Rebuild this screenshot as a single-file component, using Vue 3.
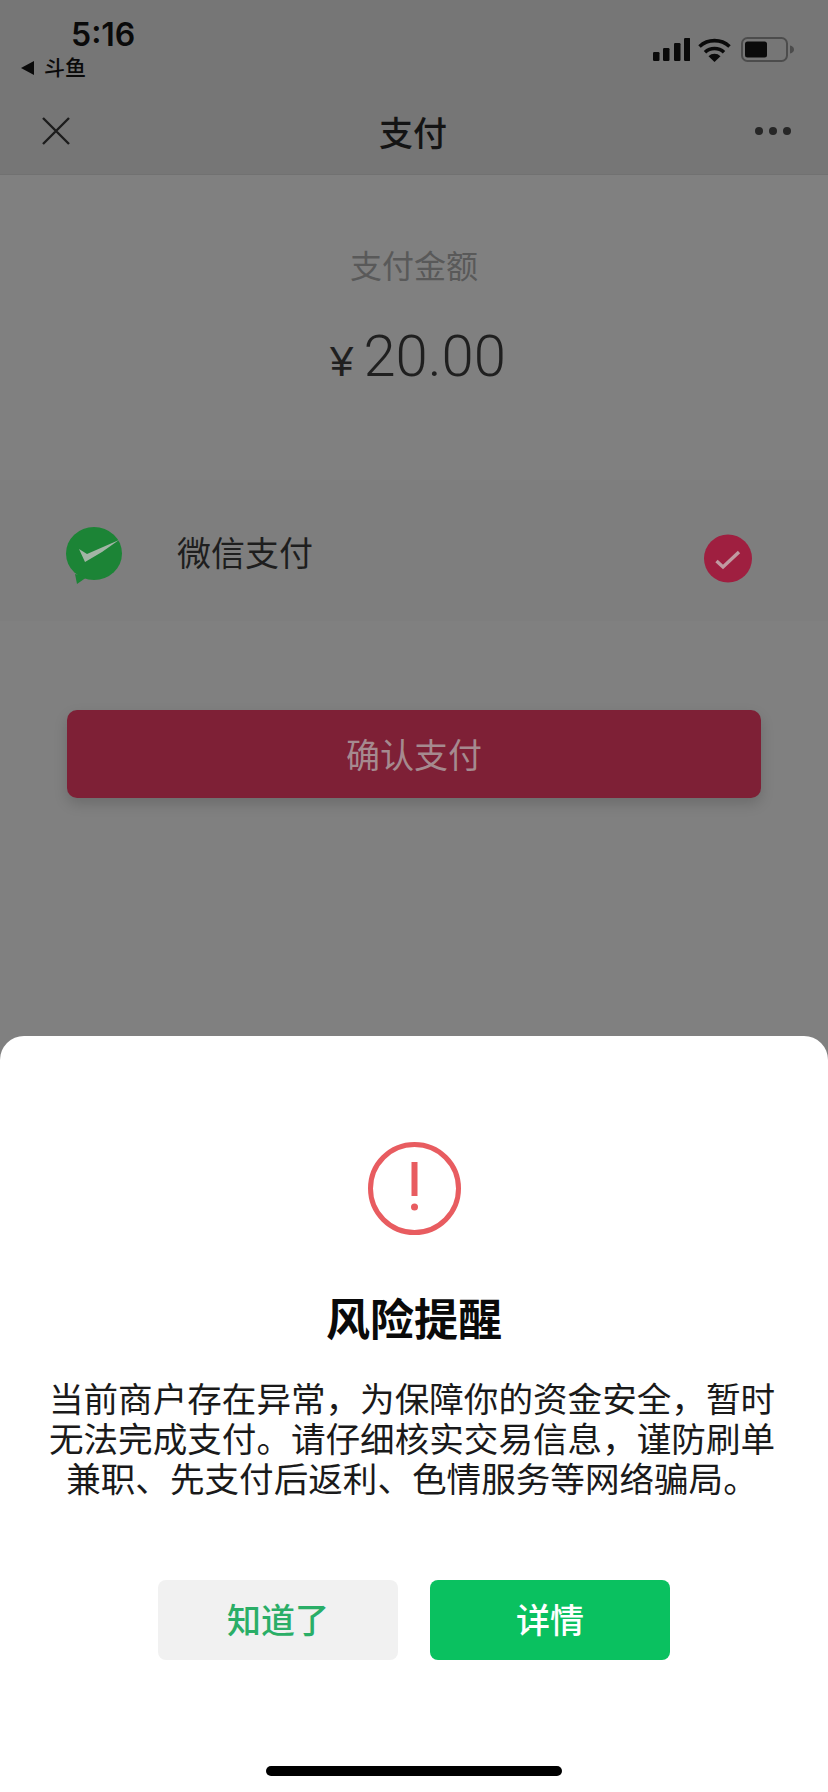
<script setup>
const signalBars = [
  { x: 0, y: 14, h: 9 },
  { x: 10, y: 10, h: 13 },
  { x: 21, y: 5, h: 18 },
  { x: 31, y: 0, h: 23 }
]
</script>

<template>
  <div class="page">
    <header class="top">
      <div class="status">
        <div class="status-left">
          <div class="time">5:16</div>
          <div class="back"><span class="back-arrow"></span>斗鱼</div>
        </div>
        <div class="status-right">
          <svg class="signal" width="37" height="23" viewBox="0 0 37 23" aria-hidden="true">
            <rect v-for="b in signalBars" :key="b.x" :x="b.x" :y="b.y" width="6.5" :height="b.h" rx="1.2" fill="#0a0a0a" />
          </svg>
          <svg width="33" height="24" viewBox="0 0 33 24" aria-hidden="true">
            <path d="M1.5 8.5a22 22 0 0 1 30 0" fill="none" stroke="#0a0a0a" stroke-width="3.6" />
            <path d="M7 14.2a14 14 0 0 1 19 0" fill="none" stroke="#0a0a0a" stroke-width="3.6" />
            <path d="M10.5 18.2a8.600 8.600 0 0 1 12 0L16.500 24z" fill="#0a0a0a" />
          </svg>
          <svg class="battery" width="54" height="25" viewBox="0 0 54 25" aria-hidden="true">
            <rect x="1" y="1" width="45" height="23" rx="5.500" fill="none" stroke="#4c4c4c" stroke-width="2" />
            <rect x="4" y="4.500" width="22" height="16" rx="2.500" fill="#0a0a0a" />
            <path d="M49 8.500c2.500.6 4 2 4 4s-1.500 3.400-4 4z" fill="#4c4c4c" />
          </svg>
        </div>
      </div>
      <nav class="nav">
        <svg class="nav-close" width="30" height="30" viewBox="0 0 30 30" aria-hidden="true">
          <path d="M2 2l26 26M28 2L2 28" stroke="#1c1c1c" stroke-width="2.400" fill="none" />
        </svg>
        <h1>支付</h1>
        <div class="nav-more"><i></i><i></i><i></i></div>
      </nav>
    </header>

    <section class="amount">
      <div class="amount-label">支付金额</div>
      <div class="amount-value"><span class="yen">¥</span>20.00</div>
    </section>

    <div class="method">
      <svg width="56" height="57" viewBox="0 0 56 57" aria-hidden="true">
        <ellipse cx="28" cy="26.500" rx="28" ry="26.500" fill="#1c8436" />
        <path d="M9 47l2 10 10-7z" fill="#1c8436" />
        <path d="M13 22l6 13L36 25 L53 13 L21 27z" fill="#a3b5a6" />
      </svg>
      <span class="method-name">微信支付</span>
      <svg class="method-check" width="48" height="49" viewBox="0 0 48 49" aria-hidden="true">
        <circle cx="24" cy="24.500" r="24" fill="#9f1f40" />
        <path d="M12.500 27l6.500 6L35 18" fill="none" stroke="#c09aa1" stroke-width="3.400" />
      </svg>
    </div>

    <button class="pay">确认支付</button>

    <section class="sheet">
      <svg class="alert" width="93" height="93" viewBox="0 0 93 93" aria-hidden="true">
        <circle cx="46.500" cy="46.500" r="44" fill="none" stroke="#e85c60" stroke-width="5" />
        <rect x="43.500" y="20" width="6" height="34" fill="#e85c60" />
        <circle cx="46.500" cy="65" r="3.500" fill="#e85c60" />
      </svg>
      <h2>风险提醒</h2>
      <p>当前商户存在异常，为保障你的资金安全，暂时无法完成支付。请仔细核实交易信息，谨防刷单兼职、先支付后返利、色情服务等网络骗局。</p>
      <div class="actions">
        <button class="btn-know">知道了</button>
        <button class="btn-detail">详情</button>
      </div>
      <div class="home-bar"></div>
    </section>
  </div>
</template>

<style>
body {
  background: #808080;
}
</style>

<style scoped>
.page {
  width: 828px;
  height: 1792px;
  display: flex;
  flex-direction: column;
  background: #808080;
  font-family: "Liberation Sans", "Noto Sans CJK SC", sans-serif;
  overflow: hidden;
}

.top {
  height: 175px;
  background: #767676;
  border-bottom: 1px solid #717171;
  box-sizing: border-box;
}

.status {
  height: 88px;
  display: flex;
  justify-content: space-between;
}

.status-left {
  padding: 17px 0 0 21px;
}

.time {
  margin-left: 50px;
  font-family: Inter, "Liberation Sans", sans-serif;
  font-size: 32px;
  line-height: 36px;
  font-weight: 600;
  color: #0a0a0a;
}

.back {
  margin-top: 3px;
  display: flex;
  align-items: center;
  font-size: 21px;
  line-height: 24px;
  font-weight: 500;
  color: #0a0a0a;
}

.back-arrow {
  width: 0;
  height: 0;
  margin-right: 10px;
  border-top: 7px solid transparent;
  border-bottom: 7px solid transparent;
  border-right: 13px solid #0a0a0a;
}

.status-right {
  display: flex;
  align-items: flex-start;
  gap: 10px;
  padding: 38px 33px 0 0;
}

.signal {
  margin-right: -2px;
}

.battery {
  margin-top: -1px;
}

.nav {
  height: 86px;
  display: flex;
  align-items: center;
  justify-content: space-between;
  padding: 0 37px 0 41px;
}

.nav h1 {
  margin: 0;
  font-size: 34px;
  font-weight: 500;
  color: #141414;
}

.nav-more {
  display: flex;
  gap: 6px;
}

.nav-more i {
  width: 8px;
  height: 8px;
  border-radius: 50%;
  background: #262626;
}

.amount {
  padding: 70px 0 86px;
  text-align: center;
}

.amount-label {
  font-size: 32px;
  line-height: 44px;
  color: #595959;
}

.amount-value {
  margin-top: 35px;
  padding-left: 8px;
  font-family: Roboto, "Liberation Sans", sans-serif;
  font-size: 58px;
  line-height: 64px;
  font-weight: 300;
  color: #1f1f1f;
}

.yen {
  margin-right: 10px;
  font-family: "Liberation Sans", sans-serif;
  font-size: 42px;
  font-weight: 400;
}

.method {
  display: flex;
  align-items: center;
  padding: 47px 76px 37px 66px;
  background: #7e7e7e;
}

.method-name {
  margin: -9px 0 0 55px;
  font-size: 34px;
  color: #1e1e1e;
}

.method-check {
  margin: 5px 0 0 auto;
}

.pay {
  width: 694px;
  height: 88px;
  margin: 89px 0 0 67px;
  padding-bottom: 3px;
  border: none;
  border-radius: 10px;
  background: #7e2036;
  box-shadow: 0 6px 14px rgba(0, 0, 0, 0.16);
  color: #a58a8f;
  font-family: inherit;
  font-size: 34px;
}

.sheet {
  margin-top: auto;
  padding-top: 106px;
  display: flex;
  flex-direction: column;
  align-items: center;
  background: #fff;
  border-radius: 24px 24px 0 0;
}

.sheet h2 {
  margin: 56px 0 0;
  font-size: 44px;
  line-height: 60px;
  font-weight: 700;
  color: #0a0a0a;
}

.sheet p {
  width: 740px;
  margin: 29px 4px 0 0;
  font-size: 34.600px;
  line-height: 40px;
  text-align: center;
  color: #1a1a1a;
}

.actions {
  margin-top: 80px;
  display: flex;
  gap: 32px;
}

.actions button {
  width: 240px;
  height: 80px;
  padding-bottom: 4px;
  border: none;
  border-radius: 8px;
  font-family: inherit;
  font-size: 34px;
  font-weight: 500;
}

.btn-know {
  background: #f1f1f1;
  color: #2aae67;
}

.btn-detail {
  background: #0ac160;
  color: #fff;
}

.home-bar {
  width: 296px;
  height: 10px;
  margin: 106px 0 16px;
  border-radius: 5px;
  background: #000;
}
</style>
